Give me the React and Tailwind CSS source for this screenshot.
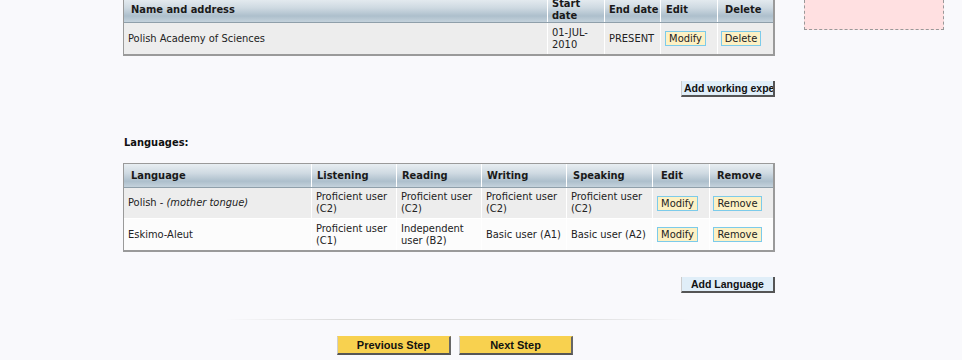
import React from "react";

const hdr =
  "bg-[linear-gradient(to_bottom,#e8eef2_0%,#cfdae2_40%,#adbfcc_75%,#c4d2dc_100%)] border-b border-[#8f9faa] font-bold text-[#1a1a1a]";

const expCols = "grid-cols-[424px_57px_56px_57px_55px]";
const langCols = "grid-cols-[188px_85px_85px_85px_86px_57px_63px]";

function SmallBtn({ children, w }) {
  return (
    <button
      className={`${w} h-[15px] bg-[#fdf1c4] border border-[#7ccbea] text-[11px] leading-[13px] text-[#222]`}
    >
      {children}
    </button>
  );
}

function AddBtn({ children, left }) {
  return (
    <button
      className={`w-[94px] h-[16px] overflow-hidden whitespace-nowrap bg-[#e0eef8] border-l border-[#ccc] border-r-2 border-b-2 border-r-[#555] border-b-[#555] ${left ? "text-left pl-[2px]" : "text-center"} font-['Liberation_Sans',Arial,sans-serif] font-bold text-[10.5px] leading-[13px] text-[#111]`}
    >
      {children}
    </button>
  );
}

function StepBtn({ children }) {
  return (
    <button className="w-[114px] h-[19px] bg-[#f8d14f] border-l border-t border-l-[#cfcfcf] border-t-[#f8d14f] border-r-2 border-b-2 border-r-[#666] border-b-[#555] font-['Liberation_Sans',Arial,sans-serif] font-bold text-[11px] leading-[14px] text-[#111]">
      {children}
    </button>
  );
}

const langs = [
  {
    name: (
      <span>
        Polish -{" "}
        <i>(mother tongue)</i>
      </span>
    ),
    l: "Proficient user (C2)",
    r: "Proficient user (C2)",
    w: "Proficient user (C2)",
    s: "Proficient user (C2)",
  },
  {
    name: "Eskimo-Aleut",
    l: "Proficient user (C1)",
    r: "Independent user (B2)",
    w: "Basic user (A1)",
    s: "Basic user (A2)",
  },
];

export default function App() {
  return (
    <div className="w-[962px] h-[360px] overflow-hidden bg-[#f9f9fc] font-['DejaVu_Sans_Condensed','DejaVu_Sans',sans-serif] text-[11px] leading-[12px] text-[#222]">
      <div className="flex items-start pl-[123px]">
        <div className="w-[652px]">
          {/* Working experience */}
          <div className="-mt-[3px] border border-[#9a9a9a] border-r-2 border-b-2 bg-white">
            <div className={`grid ${expCols} ${hdr} h-[25px]`}>
              <div className="border-r border-white pl-[7px] flex items-center">Name and address</div>
              <div className="border-r border-white pl-[4px] flex items-center">Start date</div>
              <div className="border-r border-white pl-[4px] flex items-center">End date</div>
              <div className="border-r border-white pl-[5px] flex items-center">Edit</div>
              <div className="pl-[7px] flex items-center">Delete</div>
            </div>
            <div className={`grid ${expCols} h-[31px] bg-[#ededed]`}>
              <div className="border-r border-white pl-[4px] flex items-center">Polish Academy of Sciences</div>
              <div className="border-r border-white pl-[4px] flex items-center">01-JUL-<br />2010</div>
              <div className="border-r border-white pl-[4px] flex items-center">PRESENT</div>
              <div className="border-r border-white pl-[4px] flex items-center">
                <SmallBtn w="w-[41px]">Modify</SmallBtn>
              </div>
              <div className="pl-[3px] flex items-center">
                <SmallBtn w="w-[40px]">Delete</SmallBtn>
              </div>
            </div>
          </div>

          <div className="flex justify-end mt-[25px]">
            <AddBtn left>Add working experience</AddBtn>
          </div>

          <div className="mt-[40px] pl-[1px] font-bold text-[#111]">Languages:</div>

          {/* Languages */}
          <div className="mt-[14px] border border-[#9a9a9a] border-r-2 border-b-2 bg-white">
            <div className={`grid ${langCols} ${hdr} h-[24px]`}>
              <div className="border-r border-white pl-[7px] flex items-center">Language</div>
              <div className="border-r border-white pl-[5px] flex items-center">Listening</div>
              <div className="border-r border-white pl-[5px] flex items-center">Reading</div>
              <div className="border-r border-white pl-[5px] flex items-center">Writing</div>
              <div className="border-r border-white pl-[6px] flex items-center">Speaking</div>
              <div className="border-r border-white pl-[8px] flex items-center">Edit</div>
              <div className="pl-[7px] flex items-center">Remove</div>
            </div>
            {langs.map((row, i) => (
              <div
                key={i}
                className={`grid ${langCols} h-[31px] ${i === 0 ? "bg-[#ededed] border-b border-white" : "bg-[#fcfcfc]"}`}
              >
                <div className="border-r border-white pl-[4px] flex items-center whitespace-pre">{row.name}</div>
                <div className="border-r border-white pl-[4px] pr-[2px] flex items-center">{row.l}</div>
                <div className="border-r border-white pl-[4px] pr-[2px] flex items-center">{row.r}</div>
                <div className="border-r border-white pl-[4px] pr-[2px] flex items-center">{row.w}</div>
                <div className="border-r border-white pl-[4px] pr-[2px] flex items-center">{row.s}</div>
                <div className="border-r border-white pl-[4px] flex items-center">
                  <SmallBtn w="w-[41px]">Modify</SmallBtn>
                </div>
                <div className="pl-[3px] flex items-center">
                  <SmallBtn w="w-[49px]">Remove</SmallBtn>
                </div>
              </div>
            ))}
          </div>

          <div className="flex justify-end mt-[25px]">
            <AddBtn>Add Language</AddBtn>
          </div>
        </div>

        <div className="ml-[29px] w-[140px] h-[30px] bg-[#ffe0e1] border border-t-0 border-dashed border-[#999]" />
      </div>

      <div className="ml-[225px] mt-[26px] w-[465px] h-px bg-[linear-gradient(to_right,transparent,#dcdcdc_25%,#dcdcdc_75%,transparent)]" />

      <div className="flex gap-[8px] ml-[337px] mt-[16px]">
        <StepBtn>Previous Step</StepBtn>
        <StepBtn>Next Step</StepBtn>
      </div>
    </div>
  );
}
